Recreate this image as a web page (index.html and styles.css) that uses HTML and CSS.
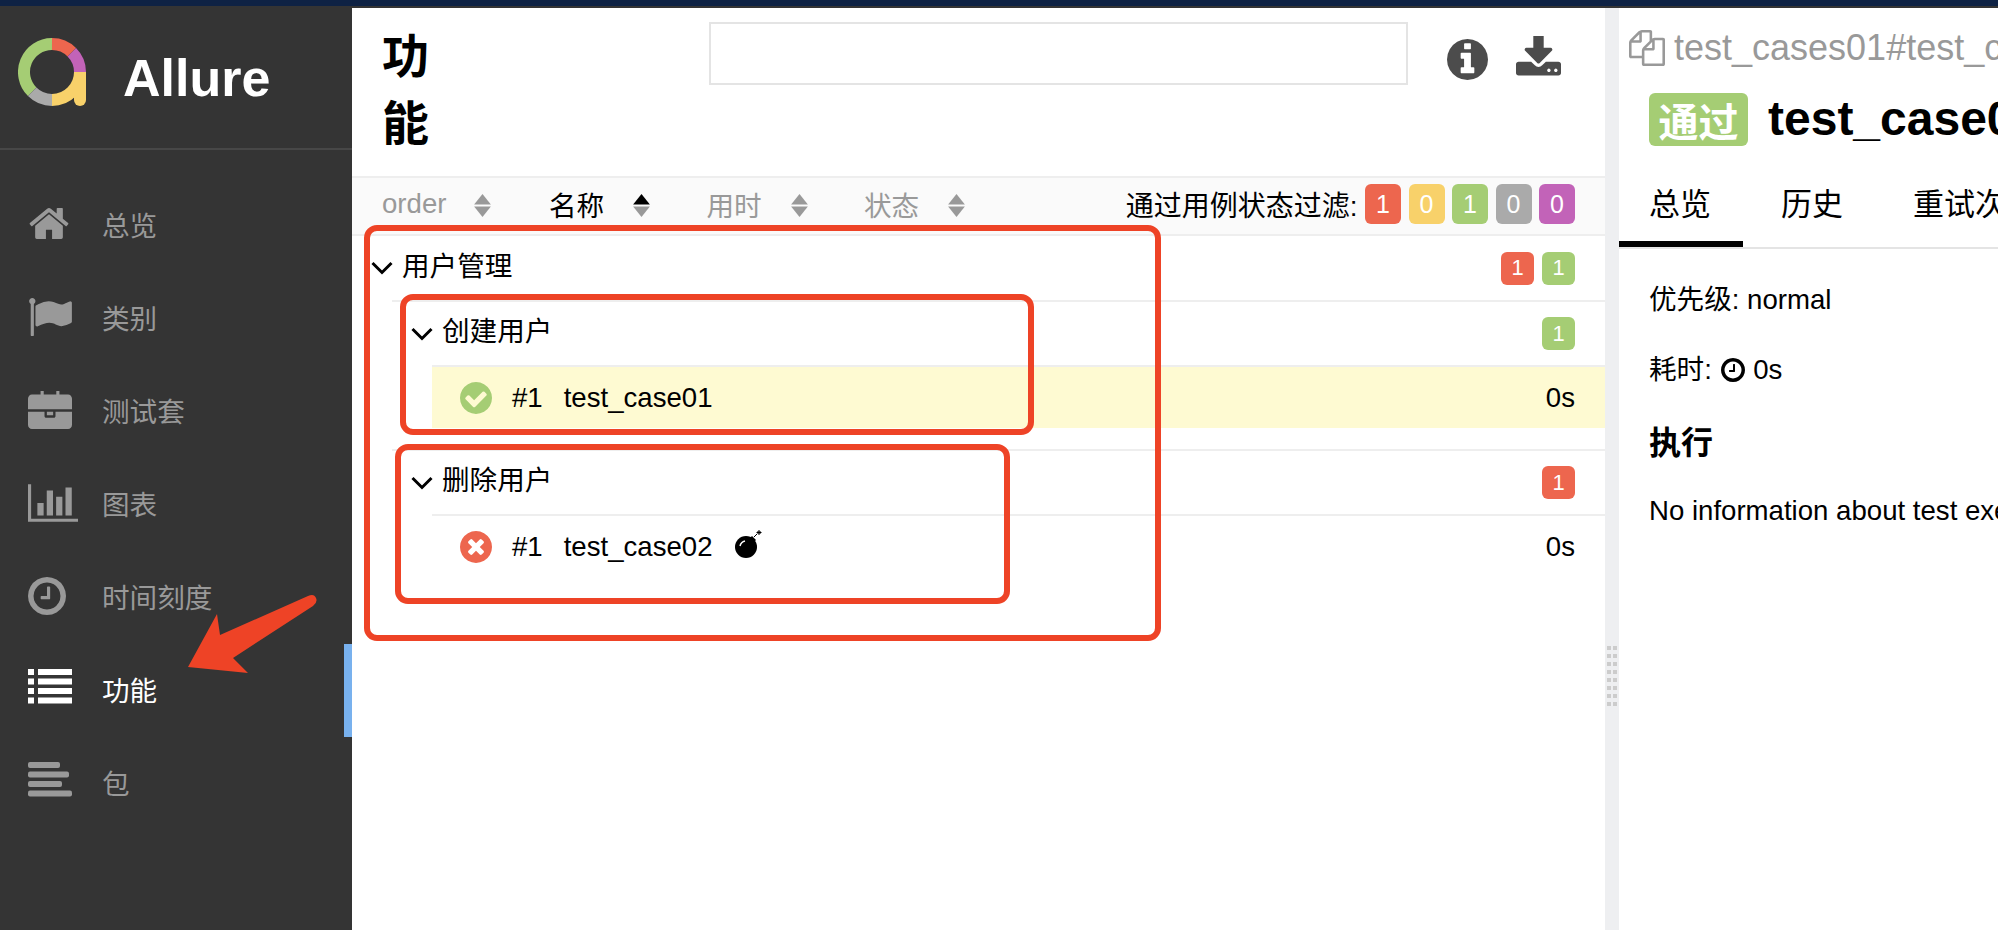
FILE: index.html
```html
<!DOCTYPE html>
<html lang="zh-CN">
<head>
<meta charset="utf-8">
<title>Allure</title>
<link rel="stylesheet" href="styles.css">
</head>
<body>
<div class="topbar"></div>
<div class="app">
  <aside class="sidebar">
    <div class="brand">
      <svg class="logo" viewBox="18 44 68 80">
        <g fill="none" stroke-width="12">
          <path stroke="#a5cd74" d="M32.2 97.8A28 28 0 0 1 52 50"/>
          <path stroke="#ed664e" d="M52 50A28 28 0 0 1 71.8 58.2"/>
          <path stroke="#c263b8" d="M71.8 58.2A28 28 0 0 1 80 78"/>
          <path stroke="#f8d16a" d="M80 78A28 28 0 0 1 52 106"/>
          <path stroke="#aaaaaa" d="M52 106A28 28 0 0 1 32.2 97.8"/>
        </g>
        <path fill="#f8d16a" d="M74 78H86V106a6 6 0 0 1-12 0Z"/>
      </svg>
      <span class="brand-name">Allure</span>
    </div>
    <nav class="nav">
      <a class="nav-item"><span class="nav-icon"><svg class="i-home" viewBox="64 256 1664 1280"><path d="M1472 992v480q0 26-19 45t-45 19h-384v-384h-256v384h-384q-26 0-45-19t-19-45v-480q0-1 .5-3t.5-3l575-474 575 474q1 2 1 6zm223-69l-62 74q-8 9-21 11h-3q-13 0-21-7l-692-577-692 577q-12 8-24 7-13-2-21-11l-62-74q-8-10-7-23.500t11-21.500l719-599q32-26 76-26t76 26l244 204v-195q0-14 9-23t23-9h192q14 0 23 9t9 23v408l219 182q10 8 11 21.500t-7 23.500z"/></svg></span><span>总览</span></a>
      <a class="nav-item"><span class="nav-icon"><svg class="i-flag" viewBox="64 128 1728 1536"><path d="M320 256q0 72-64 110v1266q0 13-9.500 22.500t-22.500 9.500h-64q-13 0-22.500-9.500t-9.500-22.500v-1266q-64-38-64-110 0-53 37.500-90.500t90.500-37.500 90.500 37.500 37.500 90.500zm1472 64v763q0 25-12.500 38.500t-39.500 27.500q-215 116-369 116-61 0-123.500-22t-108.500-48-115.500-48-142.500-22q-192 0-464 146-17 9-33 9-26 0-45-19t-19-45v-742q0-32 31-55 21-14 79-43 236-120 421-120 107 0 200 29t219 88q38 19 88 19 54 0 117.500-21t110-47 88-47 54.500-21q26 0 45 19t19 45z"/></svg></span><span>类别</span></a>
      <a class="nav-item"><span class="nav-icon"><svg class="i-brief" viewBox="0 128 1792 1408" preserveAspectRatio="none"><path d="M640 256h512v-128h-512v128zm1152 640v480q0 66-47 113t-113 47h-1472q-66 0-113-47t-47-113v-480h672v160q0 26 19 45t45 19h320q26 0 45-19t19-45v-160h672zm-768 0v128h-256v-128h256zm768-480v384h-1792v-384q0-66 47-113t113-47h352v-160q0-40 28-68t68-28h576q40 0 68 28t28 68v160h352q66 0 113 47t47 113z"/></svg></span><span>测试套</span></a>
      <a class="nav-item"><span class="nav-icon"><svg class="i-chart" viewBox="0 128 2048 1536"><path d="M640 896v512h-256v-512h256zm384-512v1024h-256v-1024h256zm1024 1152v128h-2048v-1536h128v1408h1920zm-640-896v768h-256v-768h256zm384-384v1152h-256v-1152h256z"/></svg></span><span>图表</span></a>
      <a class="nav-item"><span class="nav-icon"><svg class="i-clock" viewBox="128 128 1536 1536"><path d="M1024 544v448q0 14-9 23t-23 9h-320q-14 0-23-9t-9-23v-64q0-14 9-23t23-9h224v-352q0-14 9-23t23-9h64q14 0 23 9t9 23zm416 352q0-148-73-273t-198-198-273-73-273 73-198 198-73 273 73 273 198 198 273 73 273-73 198-198 73-273zm224 0q0 209-103 385.500t-279.500 279.500-385.500 103-385.500-103-279.500-279.500-103-385.500 103-385.500 279.500-279.500 385.500-103 385.500 103 279.500 279.500 103 385.500z"/></svg></span><span>时间刻度</span></a>
      <a class="nav-item is-active"><span class="nav-icon"><svg class="i-list" viewBox="0 0 44 35"><path d="M0 0h6v6H0zM10 0h34v6H10zM0 9.500h6v6H0zM10 9.500h34v6H10zM0 19h6v6H0zM10 19h34v6H10zM0 28.500h6v6H0zM10 28.500h34v6H10z"/></svg></span><span>功能</span></a>
      <a class="nav-item"><span class="nav-icon"><svg class="i-list" viewBox="0 0 44 35"><rect width="32" height="6" rx="2"/><rect y="9.500" width="41" height="6" rx="2"/><rect y="19" width="34" height="6" rx="2"/><rect y="28.500" width="44" height="6" rx="2"/></svg></span><span>包</span></a>
    </nav>
  </aside>

  <main class="main">
    <header class="head">
      <h1 class="head-title">功能</h1>
      <div class="search"></div>
      <div class="head-actions">
        <svg class="i-info" viewBox="128 128 1536 1536"><path d="M1152 1376v-160q0-14-9-23t-23-9h-96v-512q0-14-9-23t-23-9h-320q-14 0-23 9t-9 23v160q0 14 9 23t23 9h96v320h-96q-14 0-23 9t-9 23v160q0 14 9 23t23 9h448q14 0 23-9t9-23zm-128-896v-160q0-14-9-23t-23-9h-192q-14 0-23 9t-9 23v160q0 14 9 23t23 9h192q14 0 23-9t9-23zm640 416q0 209-103 385.500t-279.500 279.500-385.500 103-385.500-103-279.500-279.500-103-385.500 103-385.500 279.500-279.500 385.500-103 385.500 103 279.500 279.500 103 385.500z"/></svg>
        <svg class="i-download" viewBox="64 128 1664 1408"><path d="M1344 1344q0-26-19-45t-45-19-45 19-19 45 19 45 45 19 45-19 19-45zm256 0q0-26-19-45t-45-19-45 19-19 45 19 45 45 19 45-19 19-45zm128-224v320q0 40-28 68t-68 28h-1472q-40 0-68-28t-28-68v-320q0-40 28-68t68-28h465l135 136q58 56 136 56t136-56l136-136h464q40 0 68 28t28 68zm-325-569q17 41-14 70l-448 448q-18 19-45 19t-45-19l-448-448q-31-29-14-70 17-39 59-39h256v-448q0-26 19-45t45-19h256q26 0 45 19t19 45v448h256q42 0 59 39z"/></svg>
      </div>
    </header>

    <div class="sortbar">
      <div class="sort-col sort-first"><span>order</span><svg class="sort-icon" viewBox="0 0 16 22"><path class="tri" d="M8 0l8 10H0z"/><path class="tri" d="M0 12h16l-8 10z"/></svg></div>
      <div class="sort-col is-sorted"><span>名称</span><svg class="sort-icon" viewBox="0 0 16 22"><path class="tri-on" d="M8 0l8 10H0z"/><path class="tri" d="M0 12h16l-8 10z"/></svg></div>
      <div class="sort-col"><span>用时</span><svg class="sort-icon" viewBox="0 0 16 22"><path class="tri" d="M8 0l8 10H0z"/><path class="tri" d="M0 12h16l-8 10z"/></svg></div>
      <div class="sort-col"><span>状态</span><svg class="sort-icon" viewBox="0 0 16 22"><path class="tri" d="M8 0l8 10H0z"/><path class="tri" d="M0 12h16l-8 10z"/></svg></div>
      <div class="filter">
        <span class="filter-label">通过用例状态过滤:</span>
        <span class="chip failed">1</span>
        <span class="chip broken">0</span>
        <span class="chip passed">1</span>
        <span class="chip skipped">0</span>
        <span class="chip unknown">0</span>
      </div>
    </div>

    <section class="tree">
      <div class="node-head">
        <svg class="chev" viewBox="0 0 22 14"><path d="M1.500 2L11 11.500L20.500 2"/></svg>
        <span class="node-name">用户管理</span>
        <span class="counts"><span class="mini failed">1</span><span class="mini passed">1</span></span>
      </div>
      <div class="subtree">
        <div class="node-head lined">
          <svg class="chev" viewBox="0 0 22 14"><path d="M1.500 2L11 11.500L20.500 2"/></svg>
          <span class="node-name">创建用户</span>
          <span class="counts"><span class="mini passed">1</span></span>
        </div>
        <div class="leaves">
          <div class="leaf is-selected">
            <svg class="status ok" viewBox="128 128 1536 1536"><path d="M1412 734q0-28-18-46l-91-90q-19-19-45-19t-45 19l-408 407-226-226q-19-19-45-19t-45 19l-91 90q-18 18-18 46 0 27 18 45l362 362q19 19 45 19 27 0 46-19l543-543q18-18 18-45zm252 162q0 209-103 385.500t-279.500 279.500-385.500 103-385.500-103-279.500-279.500-103-385.500 103-385.500 279.500-279.500 385.500-103 385.500 103 279.500 279.500 103 385.500z"/></svg>
            <span class="leaf-order">#1</span>
            <span class="leaf-name">test_case01</span>
            <span class="leaf-time">0s</span>
          </div>
        </div>
        <div class="node-head lined">
          <svg class="chev" viewBox="0 0 22 14"><path d="M1.500 2L11 11.500L20.500 2"/></svg>
          <span class="node-name">删除用户</span>
          <span class="counts"><span class="mini failed">1</span></span>
        </div>
        <div class="leaves">
          <div class="leaf">
            <svg class="status bad" viewBox="128 128 1536 1536"><path d="M1277 1122q0-26-19-45l-181-181 181-181q19-19 19-45 0-27-19-46l-90-90q-19-19-46-19-26 0-45 19l-181 181-181-181q-19-19-45-19-27 0-46 19l-90 90q-19 19-19 46 0 26 19 45l181 181-181 181q-19 19-19 45 0 27 19 46l90 90q19 19 46 19 26 0 45-19l181-181 181 181q19 19 45 19 27 0 46-19l90-90q19-19 19-46zm387-226q0 209-103 385.500t-279.500 279.500-385.500 103-385.500-103-279.500-279.500-103-385.500 103-385.500 279.500-279.500 385.500-103 385.500 103 279.500 279.500 103 385.500z"/></svg>
            <span class="leaf-order">#1</span>
            <span class="leaf-name">test_case02</span>
            <svg class="bomb" viewBox="0 0 28 28"><circle cx="11" cy="17" r="11"/><path d="M17 6l4 4-4 4-4-4z"/><path class="bomb-shine" d="M5 16q1-4 5-5"/><path class="bomb-fuse" d="M19 7l3-3M24 0v5M21.500 2.500h5M22.500 1l3 3M25.500 1l-3 3"/></svg>
            <span class="leaf-time">0s</span>
          </div>
        </div>
      </div>
    </section>
  </main>

  <div class="splitter"><span class="grip"><i></i><i></i><i></i><i></i><i></i><i></i><i></i><i></i><i></i><i></i><i></i><i></i><i></i><i></i><i></i><i></i></span></div>

  <section class="detail">
    <div class="crumb">
      <svg class="i-files" viewBox="0 0 1792 1792"><path d="M1696 384q40 0 68 28t28 68v1216q0 40-28 68t-68 28h-960q-40 0-68-28t-28-68v-288h-544q-40 0-68-28t-28-68v-672q0-40 20-88t48-76l408-408q28-28 76-48t88-20h416q40 0 68 28t28 68v328q68-40 128-40h416zm-544 213l-299 299h299v-299zm-640-384l-299 299h299v-299zm196 647l316-316v-416h-384v416q0 40-28 68t-68 28h-416v640h512v-256q0-40 20-88t48-76zm956 804v-1152h-384v416q0 40-28 68t-68 28h-416v640h896z"/></svg>
      <span>test_cases01#test_case01</span>
    </div>
    <div class="title-row">
      <span class="pill">通过</span>
      <span class="case-title">test_case01</span>
    </div>
    <div class="tabs">
      <span class="tab is-current">总览</span>
      <span class="tab">历史</span>
      <span class="tab">重试次数</span>
    </div>
    <div class="pane">
      <p class="fact">优先级: normal</p>
      <p class="fact fact-gap">耗时: <svg class="i-mini" viewBox="128 128 1536 1536"><path d="M1024 544v448q0 14-9 23t-23 9h-320q-14 0-23-9t-9-23v-64q0-14 9-23t23-9h224v-352q0-14 9-23t23-9h64q14 0 23 9t9 23zm416 352q0-148-73-273t-198-198-273-73-273 73-198 198-73 273 73 273 198 198 273 73 273-73 198-198 73-273zm224 0q0 209-103 385.500t-279.500 279.500-385.500 103-385.500-103-279.500-279.500-103-385.500 103-385.500 279.500-279.500 385.500-103 385.500 103 279.500 279.500 103 385.500z"/></svg> 0s</p>
      <h3 class="pane-title">执行</h3>
      <p class="fact fact-tight">No information about test execution is available.</p>
    </div>
  </section>
</div>

<svg class="marks" viewBox="0 0 1998 930">
  <rect class="mark" x="367" y="228" width="791" height="410" rx="10"/>
  <rect class="mark" x="403" y="297" width="628" height="135" rx="10"/>
  <rect class="mark" x="398" y="447" width="609" height="154" rx="10"/>
  <path class="mark-arrow" d="M188 667L217 614L220 635L308 596Q314 593 316 598Q318 602 313 606L233 658L248 673Z"/>
</svg>
</body>
</html>
```
FILE: styles.css
```css
* { box-sizing: border-box; }
html, body { margin: 0; height: 100%; }
body {
  overflow: hidden;
  position: relative;
  font-family: "Liberation Sans", "Noto Sans CJK SC", sans-serif;
  font-size: 27.600px;
  color: #000;
  background: #fff;
}
.topbar { height: 8px; background: #0e2244; border-bottom: 2px solid #343434; }
.app { display: flex; height: 922px; }

/* sidebar */
.sidebar { flex: 0 0 352px; background: #343434; }
.brand {
  height: 142px;
  display: flex;
  align-items: center;
  padding-left: 18px;
  border-bottom: 2px solid #474747;
}
.logo { width: 68px; height: 80px; margin-right: 37px; }
.brand-name { font-size: 52px; font-weight: 700; color: #fff; }
.nav { padding-top: 29px; }
.nav-item {
  height: 93px;
  display: flex;
  align-items: center;
  padding: 0 0 4px 28px;
  border-right: 8px solid transparent;
  color: #999;
  fill: #999;
}
.nav-item.is-active { color: #fff; fill: #fff; border-right-color: #78b1ee; }
.nav-icon { flex: 0 0 74px; display: flex; align-items: center; }
.i-home { width: 40px; height: 31px; margin: -1px 0 0 1px; }
.i-flag { width: 43px; height: 38px; margin-left: 1px; }
.i-brief { width: 44px; height: 38px; }
.i-chart { width: 50px; height: 38px; }
.i-clock { width: 38px; height: 38px; }
.i-list { width: 44px; height: 35px; margin-top: -4px; }

/* main */
.main { flex: 0 0 1253px; background: #fff; }
.head { height: 170px; display: flex; padding-left: 30px; border-bottom: 2px solid #eeeeee; }
.head-title {
  flex: 0 0 327px;
  margin: 15px 0 0;
  padding-right: 270px;
  font-size: 47px;
  line-height: 67px;
  font-weight: 700;
  word-break: break-all;
}
.search { flex: 0 0 699px; height: 63px; margin-top: 14px; border: 2px solid #e4e4e4; }
.head-actions { display: flex; gap: 28px; align-items: flex-start; margin: 28px 0 0 39px; fill: #4c4c4c; }
.i-info { width: 41px; height: 41px; margin-top: 3px; }
.i-download { width: 45px; height: 41px; }

.sortbar {
  height: 58px;
  display: flex;
  align-items: center;
  padding: 0 30px 4px 30px;
  background: #fafafa;
  border-bottom: 2px solid #eeeeee;
  color: #999;
}
.sort-col { flex: 0 0 157.500px; display: flex; align-items: center; gap: 29px; }
.sort-first { flex-basis: 167px; gap: 28px; }
.is-sorted { color: #000; }
.sort-icon { width: 17px; height: 23px; margin-top: 3px; }
.tri { fill: #999; }
.tri-on { fill: #000; }
.filter { margin-left: auto; display: flex; align-items: center; gap: 7.500px; color: #000; }
.filter-label { font-size: 28px; }
.chip, .mini {
  display: flex;
  align-items: center;
  justify-content: center;
  color: #fff;
  border-radius: 6px;
}
.chip { width: 36px; height: 40px; font-size: 25px; }
.mini { width: 33px; height: 33px; font-size: 22px; }
.failed { background: #ed664e; }
.broken { background: #f8d16a; }
.passed { background: #a5cd74; }
.skipped { background: #aaaaaa; }
.unknown { background: #c263b8; }

/* tree */
.tree { display: flex; flex-direction: column; }
.node-head { height: 64px; display: flex; align-items: center; padding: 0 30px 0 20px; }
.node-head.lined { height: 65px; border-top: 2px solid #eeeeee; }
.chev { width: 22px; height: 14px; margin: 0 9px 0 -1px; fill: none; stroke: #000; stroke-width: 3px; }
.node-name { line-height: 38px; margin-top: -3px; }
.counts { margin-left: auto; display: flex; gap: 8px; }
.subtree { padding-left: 40px; }
.leaves { padding-left: 40px; margin-bottom: 21px; }
.leaf {
  height: 63px;
  display: flex;
  align-items: center;
  padding: 0 30px 0 28px;
  border-top: 2px solid #eeeeee;
}
.is-selected { background: #fefad2; background-clip: padding-box; }
.status { width: 32px; height: 32px; margin-right: 20px; }
.ok { fill: #a5cd74; }
.bad { fill: #ed664e; }
.leaf-order { margin: 1px 21px 0 0; }
.leaf-name { margin-top: 1px; }
.leaf-time { margin: 1px 0 0 auto; }
.bomb { width: 28px; height: 28px; margin-left: 22px; margin-top: -5px; fill: #000; }
.bomb-shine { fill: none; stroke: #fff; stroke-width: 1.500px; }
.bomb-fuse { fill: none; stroke: #000; stroke-width: 1px; }

/* splitter */
.splitter { flex: 0 0 14px; background: #eeeff1; display: flex; justify-content: center; padding-top: 638px; }
.grip { display: grid; grid-template-columns: 4px 4px; grid-auto-rows: 4px; gap: 4px 2px; height: 60px; }
.grip i { background: #cccccc; }

/* detail */
.detail { flex: 1; min-width: 0; overflow: hidden; white-space: nowrap; background: #fff; }
.crumb { display: flex; align-items: center; height: 40px; margin-top: 20px; padding-left: 10px; gap: 9px; color: #999; font-size: 36px; fill: #999; }
.i-files { width: 36px; height: 36px; flex: none; }
.title-row { display: flex; align-items: center; height: 53px; margin-top: 25px; padding-left: 30px; gap: 20px; }
.pill {
  flex: none;
  width: 99px;
  height: 53px;
  display: flex;
  align-items: center;
  justify-content: center;
  border-radius: 6px;
  background: #a5cd74;
  color: #fff;
  font-size: 40px;
  font-weight: 700;
}
.case-title { font-size: 48px; font-weight: 700; margin-top: -3px; }
.tabs { display: flex; gap: 8px; height: 79px; margin-top: 24px; border-bottom: 2px solid #e4e4e4; }
.tab { flex: none; height: 77px; padding: 0 32px 0 30px; font-size: 31px; line-height: 70px; border-bottom: 6px solid transparent; }
.tab.is-current { border-bottom-color: #000; }
.pane { padding: 32px 0 0 30px; }
.fact { margin: 0; line-height: 38px; height: 38px; }
.fact-gap { margin-top: 32px; }
.fact-tight { margin-top: 27px; }
.pane-title { margin: 32px 0 0; font-size: 32px; line-height: 44px; font-weight: 700; }
.i-mini { width: 24px; height: 24px; vertical-align: -3px; margin: 0 1px; }

/* annotations drawn over the screenshot */
.marks { position: absolute; left: 0; top: 0; width: 1998px; height: 930px; pointer-events: none; }
.mark { fill: none; stroke: #ee4326; stroke-width: 6px; }
.mark-arrow { fill: #ee4326; }
```
